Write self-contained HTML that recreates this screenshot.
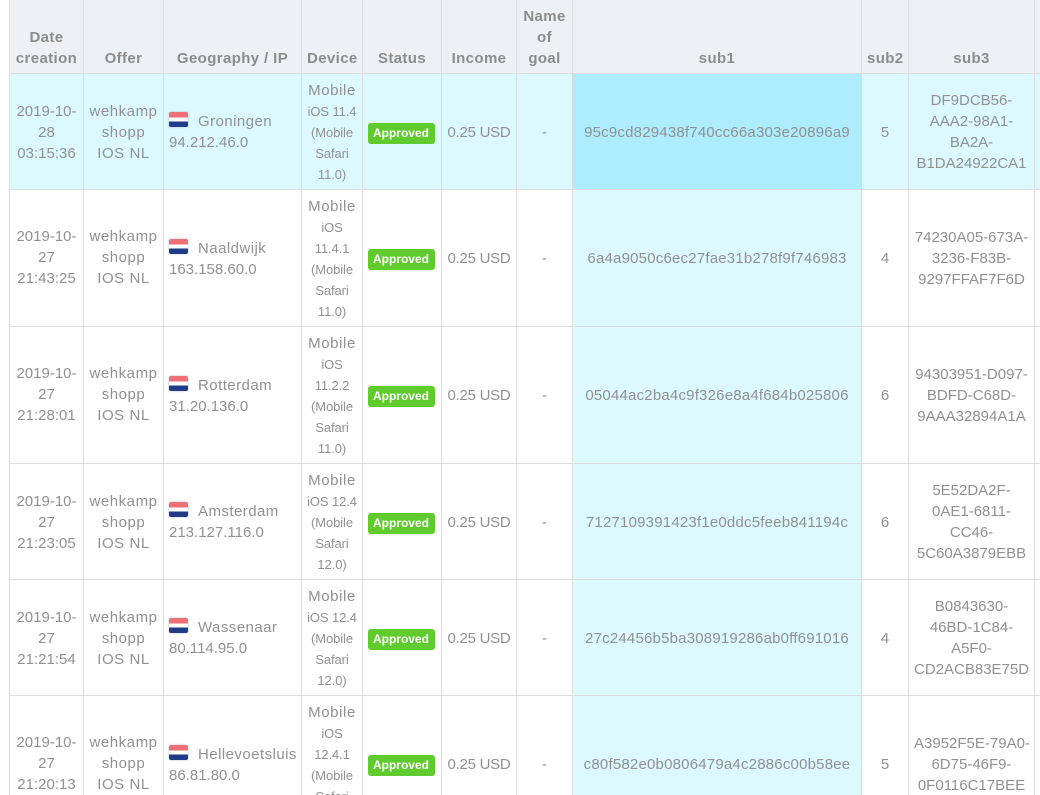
<!DOCTYPE html>
<html><head><meta charset="utf-8"><style>
html,body{margin:0;padding:0;background:#fff;width:1040px;height:795px;overflow:hidden}
#w{position:absolute;left:0;top:0;width:1040px;height:795px;overflow:hidden}
table{position:absolute;left:9px;top:-1px;border-collapse:collapse;table-layout:fixed;width:1125px;font:15px/21px "Liberation Sans",sans-serif;color:#919191}
td,th{border:1px solid #dddddd;padding:5px;text-align:center;vertical-align:middle;white-space:nowrap;overflow:hidden}
th{padding:6px 5px 4px;background:#edf0f5;vertical-align:bottom;font-weight:bold;letter-spacing:.38px;color:#8c8c8c}
tr.u td{padding:6px 5px 4px}
tr.u td:nth-child(3),tr.u td:nth-child(10){padding:5px}
tr:not(.u) td:nth-child(1),tr:not(.u) td:nth-child(2){padding:4px 5px 6px}
tr:not(.u) td:nth-child(3){padding:6px 5px 4px}
td.d{padding:6px 5px 4px}
tr.c td{background:#dbf9ff}
tr.c td.s{background:#aeecff}
td.s{background:#dbf9ff;letter-spacing:.2px}
td.g{text-align:left}
td.o{letter-spacing:.55px}
td.i{letter-spacing:-.25px}
td.d{letter-spacing:.6px}
td.g b{font-weight:normal;letter-spacing:.45px}
small{font-size:13px;letter-spacing:-.1px}
.f{display:inline-block;width:19px;height:15px;margin-right:10px;vertical-align:-1px;border-radius:2px;box-shadow:0 0 2px #b4c0c8;background:linear-gradient(#ee6f75 0 36%,#fff 36% 62%,#1f3a86 62%)}
.b{display:inline-block;width:67px;height:21px;line-height:21px;border-radius:3px;background:#5fcb2d;color:#fff;font-size:12px;font-weight:bold;position:relative;left:-1px;top:1px;letter-spacing:0}
tr.u .b{top:0}
</style></head><body><div id="w">
<table>
<colgroup><col style="width:74px"><col style="width:80px"><col style="width:138px"><col style="width:61px"><col style="width:79px"><col style="width:75px"><col style="width:56px"><col style="width:289px"><col style="width:47px"><col style="width:126px"><col style="width:100px"></colgroup>
<tr style="height:74px"><th>Date<br>creation</th><th>Offer</th><th>Geography / IP</th><th>Device</th><th>Status</th><th>Income</th><th>Name<br>of<br>goal</th><th>sub1</th><th>sub2</th><th>sub3</th><th></th></tr>
<tr class="c u" style="height:116px"><td>2019-10-<br>28<br>03:15:36</td><td class="o">wehkamp<br>shopp<br>IOS NL</td><td class="g"><span class="f"></span><b>Groningen</b><br>94.212.46.0</td><td class="d">Mobile<br><small>iOS 11.4<br>(Mobile<br>Safari<br>11.0)</small></td><td><span class="b">Approved</span></td><td class="i">0.25 USD</td><td>-</td><td class="s">95c9cd829438f740cc66a303e20896a9</td><td>5</td><td>DF9DCB56-<br>AAA2-98A1-<br>BA2A-<br>B1DA24922CA1</td><td></td></tr>
<tr style="height:137px"><td>2019-10-<br>27<br>21:43:25</td><td class="o">wehkamp<br>shopp<br>IOS NL</td><td class="g"><span class="f"></span><b>Naaldwijk</b><br>163.158.60.0</td><td class="d">Mobile<br><small>iOS<br>11.4.1<br>(Mobile<br>Safari<br>11.0)</small></td><td><span class="b">Approved</span></td><td class="i">0.25 USD</td><td>-</td><td class="s">6a4a9050c6ec27fae31b278f9f746983</td><td>4</td><td>74230A05-673A-<br>3236-F83B-<br>9297FFAF7F6D</td><td></td></tr>
<tr style="height:137px"><td>2019-10-<br>27<br>21:28:01</td><td class="o">wehkamp<br>shopp<br>IOS NL</td><td class="g"><span class="f"></span><b>Rotterdam</b><br>31.20.136.0</td><td class="d">Mobile<br><small>iOS<br>11.2.2<br>(Mobile<br>Safari<br>11.0)</small></td><td><span class="b">Approved</span></td><td class="i">0.25 USD</td><td>-</td><td class="s">05044ac2ba4c9f326e8a4f684b025806</td><td>6</td><td>94303951-D097-<br>BDFD-C68D-<br>9AAA32894A1A</td><td></td></tr>
<tr class="u" style="height:116px"><td>2019-10-<br>27<br>21:23:05</td><td class="o">wehkamp<br>shopp<br>IOS NL</td><td class="g"><span class="f"></span><b>Amsterdam</b><br>213.127.116.0</td><td class="d">Mobile<br><small>iOS 12.4<br>(Mobile<br>Safari<br>12.0)</small></td><td><span class="b">Approved</span></td><td class="i">0.25 USD</td><td>-</td><td class="s">7127109391423f1e0ddc5feeb841194c</td><td>6</td><td>5E52DA2F-<br>0AE1-6811-<br>CC46-<br>5C60A3879EBB</td><td></td></tr>
<tr class="u" style="height:116px"><td>2019-10-<br>27<br>21:21:54</td><td class="o">wehkamp<br>shopp<br>IOS NL</td><td class="g"><span class="f"></span><b>Wassenaar</b><br>80.114.95.0</td><td class="d">Mobile<br><small>iOS 12.4<br>(Mobile<br>Safari<br>12.0)</small></td><td><span class="b">Approved</span></td><td class="i">0.25 USD</td><td>-</td><td class="s">27c24456b5ba308919286ab0ff691016</td><td>4</td><td>B0843630-<br>46BD-1C84-<br>A5F0-<br>CD2ACB83E75D</td><td></td></tr>
<tr style="height:137px"><td>2019-10-<br>27<br>21:20:13</td><td class="o">wehkamp<br>shopp<br>IOS NL</td><td class="g"><span class="f"></span><b>Hellevoetsluis</b><br>86.81.80.0</td><td class="d">Mobile<br><small>iOS<br>12.4.1<br>(Mobile<br>Safari<br>12.0)</small></td><td><span class="b">Approved</span></td><td class="i">0.25 USD</td><td>-</td><td class="s">c80f582e0b0806479a4c2886c00b58ee</td><td>5</td><td>A3952F5E-79A0-<br>6D75-46F9-<br>0F0116C17BEE</td><td></td></tr>
</table>
</div></body></html>
